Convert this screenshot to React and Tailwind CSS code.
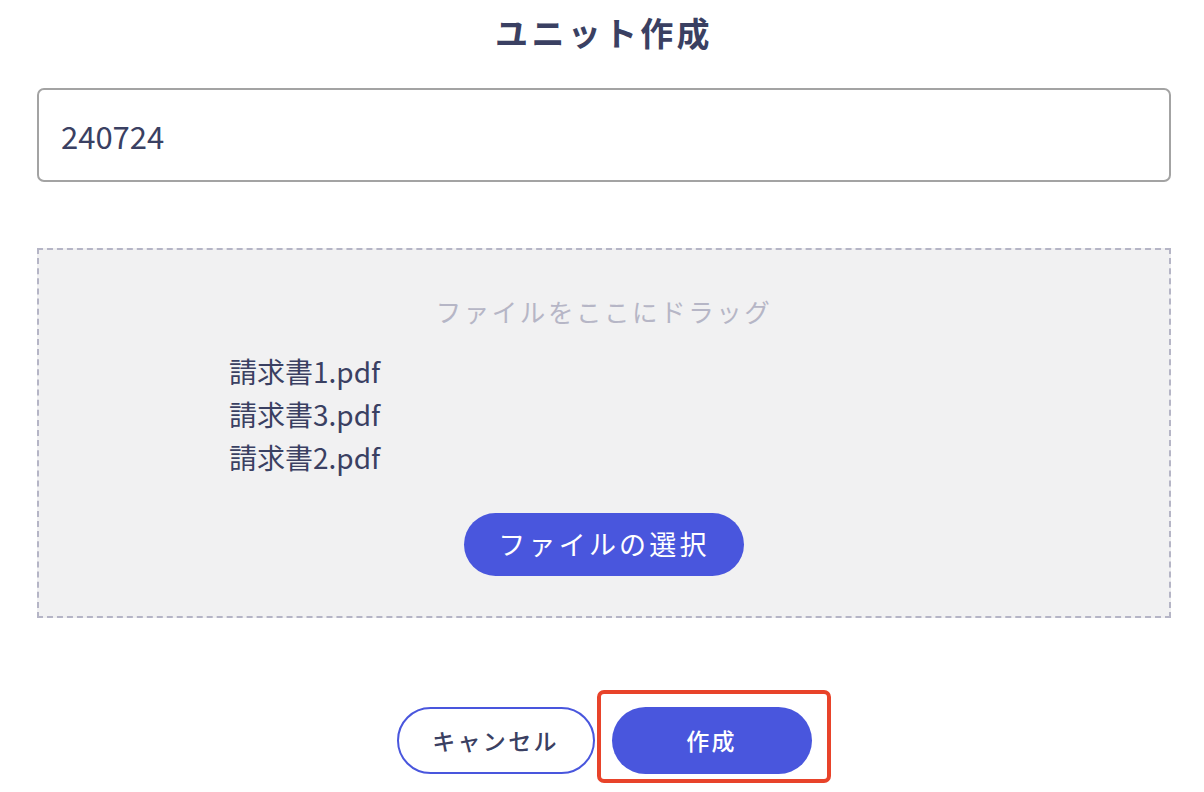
import React from 'react'

const font = { fontFamily: '"Noto Sans CJK JP", "Noto Sans", sans-serif' }

const files = ['請求書1.pdf', '請求書3.pdf', '請求書2.pdf']

function App() {
  return (
    <div className="w-[1204px] h-[792px] bg-white text-[#3a4062] overflow-hidden" style={font}>
      <div className="pl-[37px] pr-[33px] pt-[8px] flex flex-col">
        {/* タイトル */}
        <h1 className="h-[48px] text-center text-[33px] leading-[48px] font-bold tracking-[0.1em]">
          ユニット作成
        </h1>

        {/* ユニット名 */}
        <div className="mt-[32px] h-[94px] border-2 border-[#a3a3a3] rounded-[7px] flex items-center px-[22px]">
          <span className="text-[31px] leading-none">240724</span>
        </div>

        {/* ドロップゾーン */}
        <div className="mt-[66px] h-[370px] border-2 border-dashed border-[#b5b5c6] bg-[#f1f1f2] flex flex-col items-center">
          <div className="mt-[41px] text-[25.5px] leading-[40px] tracking-[0.1em] text-[#b6b6c6]">
            ファイルをここにドラッグ
          </div>
          <ul className="self-start ml-[190px] mt-[19px] flex flex-col">
            {files.map((f) => (
              <li key={f} className="text-[28px] leading-[43px]">{f}</li>
            ))}
          </ul>
          <button className="mt-[34px] w-[280px] h-[63px] rounded-full bg-[#4956dd] text-white text-[27px] tracking-[0.12em]">
            ファイルの選択
          </button>
        </div>

        {/* 操作ボタン */}
        <div className="mt-[89px] flex justify-center gap-[17px]">
          <button className="w-[198px] h-[67px] rounded-full border-2 border-[#4956dd] bg-white text-[23px] font-medium tracking-[0.1em]">
            キャンセル
          </button>
          <div className="relative">
            <button className="w-[200px] h-[67px] rounded-full bg-[#4956dd] text-white text-[23px] font-medium tracking-[0.1em]">
              作成
            </button>
            <span className="absolute left-[-15px] right-[-19px] top-[-17px] bottom-[-9px] border-4 border-[#e8432a] rounded-[7px] pointer-events-none" />
          </div>
        </div>
      </div>
    </div>
  )
}

export default App
